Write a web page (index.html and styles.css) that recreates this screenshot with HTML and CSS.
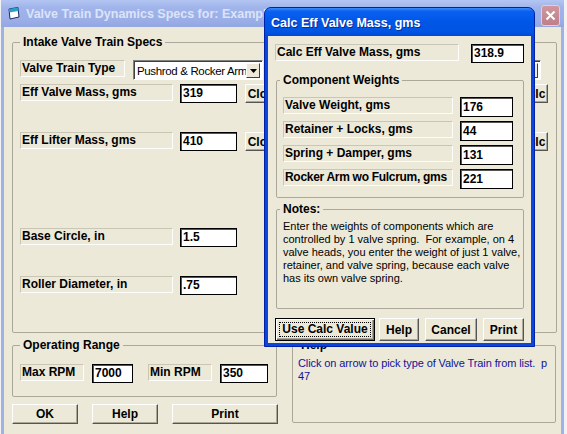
FILE: index.html
```html
<!DOCTYPE html>
<html lang="en">
<head>
    <meta charset="UTF-8">
    <title>Valve Train Dynamics Specs</title>
    <link rel="stylesheet" href="styles.css">
</head>
<body>

<!-- Main (inactive) window -->
<div class="window main">
    <div class="titlebar">
        <svg class="app-icon" width="12" height="13" viewBox="0 0 12 13">
            <polygon points="1,2 10,0.5 11,10 2,12" fill="#fff" stroke="#1a2a6a" stroke-width="1"/>
            <polygon points="1,2 10,0.5 10.4,4 1.4,5.5" fill="#2aa0c8"/>
        </svg>
        <span class="title-text">Valve Train Dynamics Specs for: Example Engine</span>
        <span class="close-btn">
            <svg width="11" height="11" viewBox="0 0 11 11">
                <path d="M1.5 1.5 L9.5 9.5 M9.5 1.5 L1.5 9.5" stroke="#fff" stroke-width="2"/>
            </svg>
        </span>
    </div>

    <div class="client">
        <fieldset class="group intake">
            <legend>Intake Valve Train Specs</legend>
            <div class="row">
                <span class="lbl lbl-type">Valve Train Type</span>
                <div class="combo">
                    <span class="combo-text">Pushrod &amp; Rocker Arm</span>
                    <span class="combo-btn"><svg width="7" height="4" viewBox="0 0 7 4"><polygon points="0,0 7,0 3.5,4" fill="#000"/></svg></span>
                </div>
                <!-- exhaust side, mostly hidden behind the dialog -->
                <div class="combo combo-right">
                    <span class="combo-text"></span>
                    <span class="combo-btn"><svg width="7" height="4" viewBox="0 0 7 4"><polygon points="0,0 7,0 3.5,4" fill="#000"/></svg></span>
                </div>
            </div>
            <div class="row">
                <span class="lbl lbl-wide">Eff Valve Mass, gms</span>
                <span class="field field-mass">319</span>
                <button class="btn btn-clc">Clc</button>
                <button class="btn btn-clc push-right">Clc</button>
            </div>
            <div class="row row-gap">
                <span class="lbl lbl-wide">Eff Lifter Mass, gms</span>
                <span class="field field-mass">410</span>
                <button class="btn btn-clc">Clc</button>
                <button class="btn btn-clc push-right">Clc</button>
            </div>
            <div class="row row-gap-lg">
                <span class="lbl lbl-wide">Base Circle, in</span>
                <span class="field field-mass">1.5</span>
            </div>
            <div class="row row-gap">
                <span class="lbl lbl-wide">Roller Diameter, in</span>
                <span class="field field-mass">.75</span>
            </div>
        </fieldset>

        <div class="bottom">
            <div class="left-col">
                <fieldset class="group range">
                    <legend>Operating Range</legend>
                    <div class="row">
                        <span class="lbl lbl-rpm">Max RPM</span>
                        <span class="field field-max">7000</span>
                        <span class="lbl lbl-rpm lbl-min">Min RPM</span>
                        <span class="field field-min">350</span>
                    </div>
                </fieldset>
                <div class="main-buttons">
                    <button class="btn btn-ok">OK</button>
                    <button class="btn btn-help">Help</button>
                    <button class="btn btn-print">Print</button>
                </div>
            </div>
            <fieldset class="group help-box">
                <legend>Help</legend>
                <p class="help-text">Click on arrow to pick type of Valve Train from list. &nbsp;p<br>47</p>
            </fieldset>
        </div>
    </div>
</div>

<!-- Active dialog -->
<div class="window dialog">
    <div class="titlebar">
        <span class="title-text">Calc Eff Valve Mass, gms</span>
    </div>
    <div class="client">
        <div class="row">
            <span class="lbl lbl-calc">Calc Eff Valve Mass, gms</span>
            <span class="field field-calc">318.9</span>
        </div>

        <fieldset class="group weights">
            <legend>Component Weights</legend>
            <div class="row">
                <span class="lbl lbl-part">Valve Weight, gms</span>
                <span class="field field-part">176</span>
            </div>
            <div class="row">
                <span class="lbl lbl-part">Retainer + Locks, gms</span>
                <span class="field field-part">44</span>
            </div>
            <div class="row">
                <span class="lbl lbl-part">Spring + Damper, gms</span>
                <span class="field field-part">131</span>
            </div>
            <div class="row">
                <span class="lbl lbl-part lbl-tight">Rocker Arm wo Fulcrum, gms</span>
                <span class="field field-part">221</span>
            </div>
        </fieldset>

        <fieldset class="group notes">
            <legend>Notes:</legend>
            <p class="notes-text">Enter the weights of components which are<br>controlled by 1 valve spring. &nbsp;For example, on 4<br>valve heads, you enter the weight of just 1 valve,<br>retainer, and valve spring, because each valve<br>has its own valve spring.</p>
        </fieldset>

        <div class="dialog-buttons">
            <button class="btn btn-default"><span class="focus">Use Calc Value</span></button>
            <button class="btn btn-dhelp">Help</button>
            <button class="btn btn-cancel">Cancel</button>
            <button class="btn btn-dprint">Print</button>
        </div>
    </div>
</div>

</body>
</html>
```

FILE: styles.css
```css
/* General styles */
* {
    box-sizing: border-box;
}

body {
    margin: 0;
    width: 567px;
    height: 434px;
    overflow: hidden;
    position: relative;
    background-color: #f2f2f2;
    font-family: 'Liberation Sans', Arial, sans-serif;
    font-size: 12px;
    color: #000;
}

/* Windows */
.window {
    position: absolute;
    display: flex;
    flex-direction: column;
}

.main {
    left: 1px;
    top: 0;
    width: 563px;
    height: 440px;
}

.main .titlebar {
    height: 27px;
    display: flex;
    align-items: center;
    padding: 0 4px 0 7px;
    background: linear-gradient(180deg, #b3c5f2 0%, #a0b3ea 30%, #9cafe8 70%, #93a7e2 100%);
}

.app-icon {
    flex: none;
}

.main .title-text {
    margin-left: 6px;
    color: #dbe4f8;
    font-weight: bold;
    font-size: 12.5px;
    white-space: nowrap;
    overflow: hidden;
    flex: 1;
}

.close-btn {
    flex: none;
    align-self: flex-end;
    margin-bottom: 1px;
    width: 19px;
    height: 21px;
    border: 1px solid #e6cdd2;
    border-radius: 3px;
    background: linear-gradient(180deg, #d0979e, #bf7f88);
    display: flex;
    align-items: center;
    justify-content: center;
}

.main .client {
    flex: 1;
    background-color: #ece9d8;
    border-left: 3px solid #9fb1e6;
    border-right: 3px solid #9fb1e6;
    padding: 8px 0 0 8px;
}

/* Group boxes */
.group {
    margin: 0;
    min-width: 0;
    border: 1px solid #aca899;
    border-radius: 2px;
}

.group legend {
    font-weight: bold;
    font-size: 12px;
    line-height: 14px;
    padding: 0 3px;
}

.intake {
    width: 545px;
    height: 298px;
    padding: 11px 7px 0 7px;
}

/* Rows, labels, fields */
.row {
    display: flex;
    align-items: flex-start;
}

.row + .row {
    margin-top: 4px;
}

.row.row-gap {
    margin-top: 29px;
}

.row.row-gap-lg {
    margin-top: 77px;
}

.lbl {
    flex: none;
    height: 17px;
    padding: 0 1px;
    border: 1px solid;
    border-color: #c9c6b6 #fdfdfb #fdfdfb #c9c6b6;
    font-weight: bold;
    line-height: 15px;
    white-space: nowrap;
    overflow: hidden;
}

.lbl-type { width: 105px; }
.lbl-wide { width: 153px; }
.lbl-rpm { width: 64px; }
.lbl-min { margin-left: 15px; }

.field {
    flex: none;
    height: 19px;
    padding: 0 2px;
    background-color: #fff;
    border: 1px solid #000;
    box-shadow: inset 1px 1px 0 #555;
    font-weight: bold;
    line-height: 17px;
}

.field-mass { width: 57px; margin-left: 7px; }
.field-max { width: 41px; margin-left: 8px; }
.field-min { width: 48px; margin-left: 8px; }

/* Combo box */
.combo {
    flex: none;
    width: 130px;
    height: 20px;
    margin-left: 8px;
    display: flex;
    align-items: center;
    background-color: #fff;
    border: 1px solid;
    border-color: #7f7f7f #fff #fff #7f7f7f;
    box-shadow: inset 1px 1px 0 #404040;
    padding: 2px 2px 1px 3px;
}

.combo-right {
    width: 110px;
    margin-left: auto;
    margin-right: 8px;
}

.combo-text {
    flex: 1;
    font-size: 11.5px;
    letter-spacing: -0.35px;
    white-space: nowrap;
    overflow: hidden;
}

.combo-btn {
    flex: none;
    width: 14px;
    height: 15px;
    background-color: #ece9d8;
    border: 1px solid;
    border-color: #fff #404040 #404040 #fff;
    display: flex;
    align-items: center;
    justify-content: center;
}

/* Buttons */
.btn {
    flex: none;
    height: 20px;
    padding: 0;
    background-color: #ece9d8;
    border: 1px solid;
    border-color: #fff #555 #555 #fff;
    box-shadow: inset -1px -1px 0 #aca899;
    font-family: 'Liberation Sans', Arial, sans-serif;
    font-weight: bold;
    font-size: 12px;
    color: #000;
}

.btn-clc {
    width: 24px;
    height: 19px;
    margin-left: 8px;
}

.btn-clc.push-right {
    margin-left: auto;
    margin-right: 1px;
}

/* Bottom area of main window */
.bottom {
    display: flex;
    align-items: flex-start;
    margin-top: 5px;
}

.left-col {
    width: 266px;
}

.range {
    width: 265px;
    height: 59px;
    padding: 12px 7px 0 7px;
}

.main-buttons {
    display: flex;
    margin-top: 7px;
}

.btn-ok { width: 66px; }
.btn-help { width: 66px; margin-left: 14px; }
.btn-print { width: 106px; margin-left: 14px; }

.help-box {
    width: 264px;
    height: 85px;
    margin-left: 14px;
    padding: 5px 2px 0 5px;
}

.help-text {
    margin: 0;
    color: #12129c;
    font-size: 11px;
    line-height: 13px;
    letter-spacing: -0.1px;
    white-space: nowrap;
}

/* Dialog */
.dialog {
    left: 264px;
    top: 7px;
    width: 271px;
    height: 340px;
    background-color: #0b45dc;
    border: 1px solid #0022a8;
    border-radius: 7px 7px 0 0;
}

.dialog .titlebar {
    height: 28px;
    display: flex;
    align-items: center;
    padding: 2px 0 0 6px;
    border-radius: 6px 6px 0 0;
    background: linear-gradient(180deg, #3d8cff 0%, #0a60f0 12%, #0056e6 50%, #0055e3 85%, #0148d2 100%);
}

.dialog .title-text {
    color: #fff;
    font-weight: bold;
    font-size: 12.5px;
    text-shadow: 1px 1px 0 #0a2a9a;
}

.dialog .client {
    flex: 1;
    margin: 0 3px 3px 3px;
    background-color: #ece9d8;
    padding: 8px 0 0 7px;
}

.lbl-calc { width: 184px; }
.field-calc { width: 53px; margin-left: 12px; }

.dialog .group legend {
    margin-left: -3px;
}

.weights {
    width: 248px;
    margin: 10px 0 0 1px;
    padding: 10px 6px 8px 6px;
}

.weights .row + .row {
    margin-top: 4px;
}

.lbl-part { width: 170px; }

.lbl-tight {
    letter-spacing: -0.3px;
}

.field-part {
    width: 53px;
    height: 20px;
    margin-left: 7px;
    line-height: 18px;
}

.notes {
    width: 248px;
    height: 107px;
    margin: 4px 0 0 1px;
    padding: 4px 0 0 6px;
}

.notes-text {
    margin: 0;
    font-size: 11px;
    line-height: 13px;
    white-space: nowrap;
}

.dialog-buttons {
    display: flex;
    margin-top: 9px;
}

.dialog-buttons .btn {
    height: 23px;
}

.btn-default {
    width: 100px;
    border: 1px solid #000;
    box-shadow: inset 1px 1px 0 #fff, inset -1px -1px 0 #716f64, inset -2px -2px 0 #aca899;
    padding: 3px;
}

.focus {
    display: block;
    height: 15px;
    line-height: 13px;
    border: 1px dotted #000;
}

.btn-dhelp { width: 40px; margin-left: 4px; }
.btn-cancel { width: 52px; margin-left: 6px; }
.btn-dprint { width: 41px; margin-left: 6px; }
```
